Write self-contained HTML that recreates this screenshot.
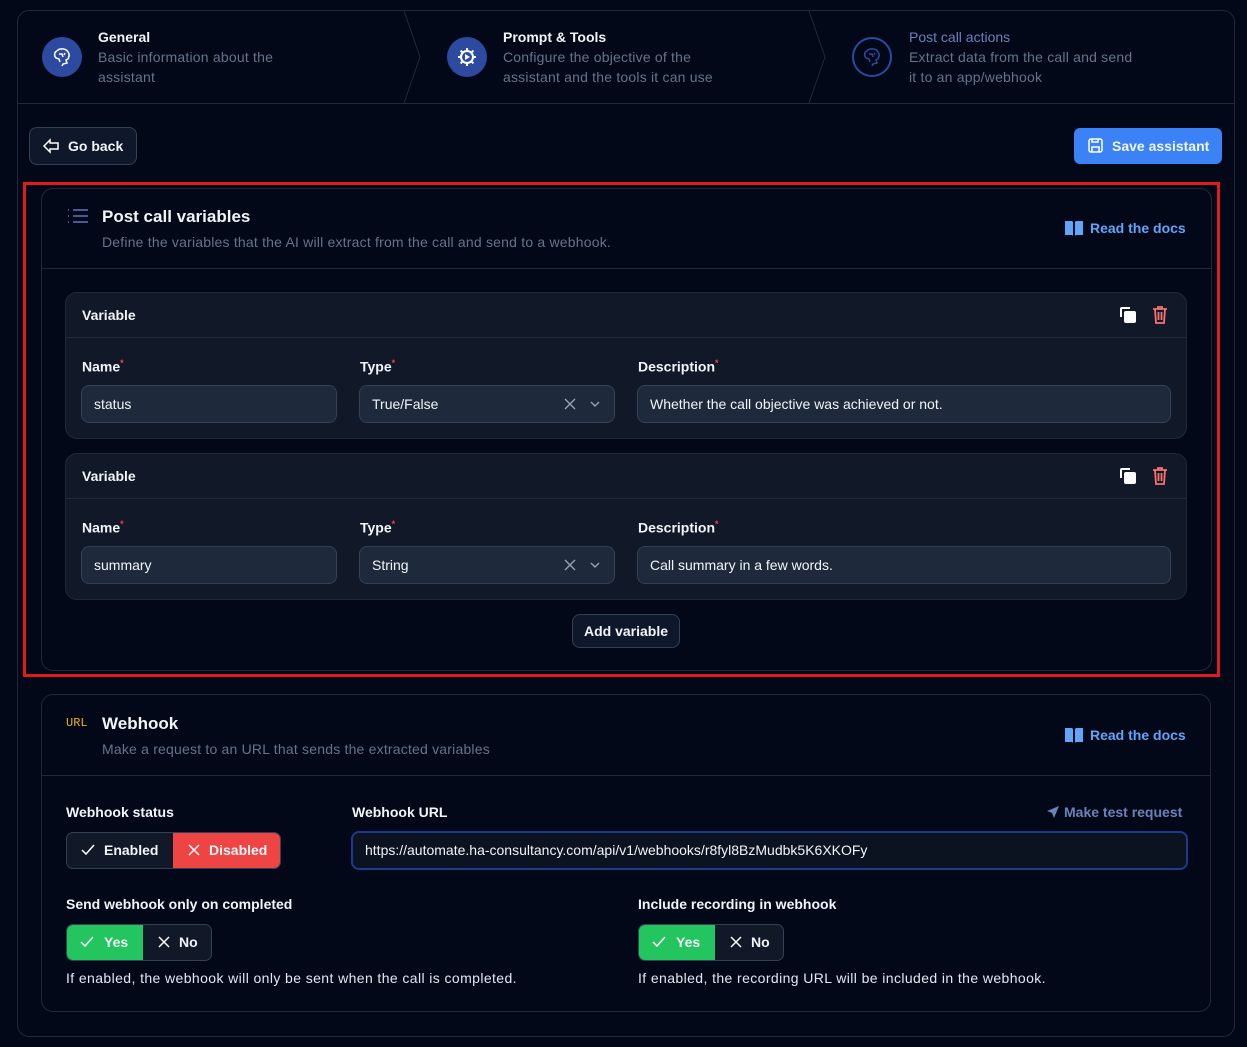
<!DOCTYPE html>
<html><head><meta charset="utf-8"><style>
*{box-sizing:border-box;margin:0;padding:0}
body{width:1247px;height:1047px;background:#020817;font-family:"Liberation Sans",sans-serif;color:#f1f5f9;position:relative;overflow:hidden;font-size:14px}
.a{position:absolute}
.b{border:1px solid #1e293b}
.t{font-weight:bold;color:#f1f5f9;white-space:nowrap}
.m{color:#64748b;white-space:nowrap;letter-spacing:0.2px}
.inp{position:absolute;height:38px;border:1px solid #334155;background:#1e293b;border-radius:8px;padding:0 12px;line-height:36px;font-size:14px;color:#f1f5f9}
.lbl{position:absolute;font-size:14px;font-weight:bold;color:#f1f5f9}
.lbl sup{color:#ef4444;font-size:9px}
.var{position:absolute;left:65px;width:1122px;height:147px;background:#111827;border:1px solid #1e293b;border-radius:12px}
</style></head><body>
<div class="a b" style="left:17px;top:10px;width:1218px;height:1027px;border-radius:12px;background:#020817"></div>
<div class="a" style="left:18px;top:103px;width:1216px;height:1px;background:#1e293b"></div>
<svg class="a" style="left:400px;top:11px" width="430" height="92"><path d="M4 0 L20 46 L4 92 M409 0 L425 46 L409 92" stroke="#1e293b" fill="none"/></svg>
<div class="a" style="left:42px;top:37px;width:40px;height:40px;border-radius:50%;background:#2b4aa0"></div>
<svg class="a" style="left:52px;top:47px" width="20" height="20" viewBox="0 0 20 20" fill="none" stroke="#fff" stroke-width="1.5"><path d="M5 4c2-3 9-3 11 1 2 2 1 5 0 7l-2 1 1 3-4 1-1 2M5 4C2 5 2 9 4 11l3 1 1 3M7 7h3l1 3M13 6l-1 2"/></svg>
<div class="a t" style="left:98px;top:29px;font-size:14px">General</div>
<div class="a m" style="left:98px;top:47px;line-height:20px">Basic information about the<br>assistant</div>
<div class="a" style="left:447px;top:37px;width:40px;height:40px;border-radius:50%;background:#2b4aa0"></div>
<svg class="a" style="left:456px;top:46px" width="22" height="22" viewBox="0 0 22 22" fill="none" stroke="#fff" stroke-width="2"><circle cx="11" cy="11" r="6"/><path d="M11 2v3M11 17v3M2 11h3M17 11h3M4.6 4.6l2 2M15.4 15.4l2 2M4.6 17.4l2-2M15.4 6.6l2-2"/><path d="M9 8l5 3-5 3z" fill="#fff" stroke="none"/></svg>
<div class="a t" style="left:503px;top:29px">Prompt &amp; Tools</div>
<div class="a m" style="left:503px;top:47px;line-height:20px">Configure the objective of the<br>assistant and the tools it can use</div>
<div class="a" style="left:852px;top:37px;width:40px;height:40px;border-radius:50%;border:2px solid #2b4aa0"></div>
<svg class="a" style="left:862px;top:47px" width="20" height="20" viewBox="0 0 20 20" fill="none" stroke="#2b4aa0" stroke-width="1.5"><path d="M5 4c2-3 9-3 11 1 2 2 1 5 0 7l-2 1 1 3-4 1-1 2M5 4C2 5 2 9 4 11l3 1 1 3M7 7h3l1 3M13 6l-1 2"/></svg>
<div class="a" style="left:909px;top:29px;color:#6b82b8;white-space:nowrap">Post call actions</div>
<div class="a m" style="left:909px;top:47px;line-height:20px">Extract data from the call and send<br>it to an app/webhook</div>
<div class="a" style="left:29px;top:127px;width:108px;height:38px;border:1px solid #334155;border-radius:8px;background:#0f172a"></div>
<svg class="a" style="left:42px;top:137px" width="18" height="18" viewBox="0 0 18 18" fill="none" stroke="#fff" stroke-width="1.5"><path d="M2 9l6-6v3h8v6H8v3z"/></svg>
<div class="a t" style="left:68px;top:138px">Go back</div>
<div class="a" style="left:1074px;top:128px;width:148px;height:36px;border-radius:6px;background:#3b82f6"></div>
<svg class="a" style="left:1087px;top:137px" width="17" height="17" viewBox="0 0 17 17" fill="none" stroke="#fff" stroke-width="1.5"><rect x="2" y="2" width="13" height="13" rx="2"/><path d="M5 15v-5h7v5M5 2v3h6V2"/></svg>
<div class="a t" style="left:1112px;top:138px">Save assistant</div>
<div class="a" style="left:23px;top:182px;width:1197px;height:495px;border:3px solid #e01b1b"></div>
<div class="a b" style="left:41px;top:188px;width:1171px;height:483px;border-radius:12px"></div>
<div class="a" style="left:42px;top:268px;width:1169px;height:1px;background:#1e293b"></div>
<svg class="a" style="left:67px;top:208px" width="22" height="16" viewBox="0 0 22 16" stroke="#5b77c4" stroke-width="1.5"><path d="M1 2h1M1 8h1M1 14h1M6 2h15M6 8h15M6 14h15"/></svg>
<div class="a t" style="left:102px;top:207px;font-size:17px">Post call variables</div>
<div class="a m" style="left:102px;top:234px">Define the variables that the AI will extract from the call and send to a webhook.</div>
<svg class="a" style="left:1065px;top:220px" width="18" height="16" viewBox="0 0 18 16" fill="#60a5fa"><path d="M0 1h7l1 1v14l-1-1H0zM18 1h-7l-1 1v14l1-1h7z"/></svg>
<div class="a" style="left:1090px;top:220px;color:#60a5fa;font-weight:bold;white-space:nowrap">Read the docs</div>
<div class="var" style="top:292px"></div>
<div class="a" style="left:66px;top:337px;width:1120px;height:1px;background:#1e293b"></div>
<div class="var" style="top:453px"></div>
<div class="a" style="left:66px;top:498px;width:1120px;height:1px;background:#1e293b"></div>
<div class="lbl" style="left:82px;top:307px">Variable</div>
<div class="lbl" style="left:82px;top:468px">Variable</div>
<svg class="a" style="left:1119px;top:306px" width="18" height="18" viewBox="0 0 18 18" fill="#fff"><path d="M1 11V3a2 2 0 012-2h8v2H3v8z"/><rect x="5" y="5" width="12" height="12" rx="2"/></svg>
<svg class="a" style="left:1119px;top:467px" width="18" height="18" viewBox="0 0 18 18" fill="#fff"><path d="M1 11V3a2 2 0 012-2h8v2H3v8z"/><rect x="5" y="5" width="12" height="12" rx="2"/></svg>
<svg class="a" style="left:1152px;top:305px" width="16" height="20" viewBox="0 0 16 20" fill="none" stroke="#f87171" stroke-width="1.8"><path d="M1 4h14M6 4V2h4v2M3 4l1 14h8l1-14M6.5 7v8M9.5 7v8"/></svg>
<svg class="a" style="left:1152px;top:466px" width="16" height="20" viewBox="0 0 16 20" fill="none" stroke="#f87171" stroke-width="1.8"><path d="M1 4h14M6 4V2h4v2M3 4l1 14h8l1-14M6.5 7v8M9.5 7v8"/></svg>
<div class="lbl" style="left:82px;top:358px">Name<sup>*</sup></div>
<div class="lbl" style="left:360px;top:358px">Type<sup>*</sup></div>
<div class="lbl" style="left:638px;top:358px">Description<sup>*</sup></div>
<div class="inp" style="left:81px;top:385px;width:256px">status</div>
<div class="inp" style="left:359px;top:385px;width:256px">True/False</div>
<div class="inp" style="left:637px;top:385px;width:534px">Whether the call objective was achieved or not.</div>
<div class="lbl" style="left:82px;top:519px">Name<sup>*</sup></div>
<div class="lbl" style="left:360px;top:519px">Type<sup>*</sup></div>
<div class="lbl" style="left:638px;top:519px">Description<sup>*</sup></div>
<div class="inp" style="left:81px;top:546px;width:256px">summary</div>
<div class="inp" style="left:359px;top:546px;width:256px">String</div>
<div class="inp" style="left:637px;top:546px;width:534px">Call summary in a few words.</div>
<svg class="a" style="left:563px;top:397px" width="40" height="14" viewBox="0 0 40 14" fill="none" stroke="#94a3b8" stroke-width="1.4"><path d="M2 2l10 10M12 2L2 12M28 5l4 4 4-4"/></svg>
<svg class="a" style="left:563px;top:558px" width="40" height="14" viewBox="0 0 40 14" fill="none" stroke="#94a3b8" stroke-width="1.4"><path d="M2 2l10 10M12 2L2 12M28 5l4 4 4-4"/></svg>
<div class="a" style="left:572px;top:614px;width:108px;height:34px;border:1px solid #334155;border-radius:8px;background:#0f172a"></div>
<div class="a t" style="left:584px;top:623px">Add variable</div>
<div class="a b" style="left:41px;top:694px;width:1170px;height:318px;border-radius:12px"></div>
<div class="a" style="left:42px;top:775px;width:1168px;height:1px;background:#1e293b"></div>
<div class="a" style="left:66px;top:716px;color:#eab308;font-size:12px;font-family:'Liberation Mono',monospace">URL</div>
<div class="a t" style="left:102px;top:714px;font-size:17px">Webhook</div>
<div class="a m" style="left:102px;top:741px">Make a request to an URL that sends the extracted variables</div>
<svg class="a" style="left:1065px;top:727px" width="18" height="16" viewBox="0 0 18 16" fill="#60a5fa"><path d="M0 1h7l1 1v14l-1-1H0zM18 1h-7l-1 1v14l1-1h7z"/></svg>
<div class="a" style="left:1090px;top:727px;color:#60a5fa;font-weight:bold;white-space:nowrap">Read the docs</div>
<div class="lbl" style="left:66px;top:804px">Webhook status</div>
<div class="lbl" style="left:352px;top:804px">Webhook URL</div>
<svg class="a" style="left:1046px;top:805px" width="14" height="14" viewBox="0 0 14 14" fill="#6b82b8"><path d="M13 1L1 6l5 2 2 5z"/></svg>
<div class="a" style="left:1064px;top:804px;color:#6b82b8;font-weight:bold;white-space:nowrap">Make test request</div>
<div class="a" style="left:66px;top:832px;width:215px;height:37px;border:1px solid #334155;border-radius:7px;background:#111827;overflow:hidden"><div class="a" style="left:106px;top:0;width:109px;height:37px;background:#ef4444"></div></div>
<svg class="a" style="left:81px;top:843px" width="14" height="14" viewBox="0 0 14 14" fill="none" stroke="#fff" stroke-width="1.5"><path d="M1 7l4 4 8-9"/></svg>
<div class="a t" style="left:104px;top:842px">Enabled</div>
<svg class="a" style="left:187px;top:843px" width="14" height="14" viewBox="0 0 14 14" fill="none" stroke="#fff" stroke-width="1.5"><path d="M2 2l10 10M12 2L2 12"/></svg>
<div class="a t" style="left:209px;top:842px">Disabled</div>
<div class="inp" style="left:351px;top:831px;width:837px;height:39px;border:2px solid #1e3a8a;background:#0b1220;line-height:35px">https://automate.ha-consultancy.com/api/v1/webhooks/r8fyl8BzMudbk5K6XKOFy</div>
<div class="lbl" style="left:66px;top:896px">Send webhook only on completed</div>
<div class="lbl" style="left:638px;top:896px">Include recording in webhook</div>
<div class="a" style="left:66px;top:924px;width:146px;height:37px;border:1px solid #334155;border-radius:7px;background:#111827;overflow:hidden"><div class="a" style="left:0;top:0;width:76px;height:37px;background:#22c55e"></div></div>
<svg class="a" style="left:80px;top:935px" width="14" height="14" viewBox="0 0 14 14" fill="none" stroke="#fff" stroke-width="1.5"><path d="M1 7l4 4 8-9"/></svg>
<div class="a t" style="left:104px;top:934px">Yes</div>
<svg class="a" style="left:157px;top:935px" width="14" height="14" viewBox="0 0 14 14" fill="none" stroke="#fff" stroke-width="1.5"><path d="M2 2l10 10M12 2L2 12"/></svg>
<div class="a t" style="left:179px;top:934px">No</div>
<div class="a" style="left:638px;top:924px;width:146px;height:37px;border:1px solid #334155;border-radius:7px;background:#111827;overflow:hidden"><div class="a" style="left:0;top:0;width:76px;height:37px;background:#22c55e"></div></div>
<svg class="a" style="left:652px;top:935px" width="14" height="14" viewBox="0 0 14 14" fill="none" stroke="#fff" stroke-width="1.5"><path d="M1 7l4 4 8-9"/></svg>
<div class="a t" style="left:676px;top:934px">Yes</div>
<svg class="a" style="left:729px;top:935px" width="14" height="14" viewBox="0 0 14 14" fill="none" stroke="#fff" stroke-width="1.5"><path d="M2 2l10 10M12 2L2 12"/></svg>
<div class="a t" style="left:751px;top:934px">No</div>
<div class="a" style="left:66px;top:970px;color:#e2e8f0;white-space:nowrap;letter-spacing:0.4px">If enabled, the webhook will only be sent when the call is completed.</div>
<div class="a" style="left:638px;top:970px;color:#e2e8f0;white-space:nowrap;letter-spacing:0.4px">If enabled, the recording URL will be included in the webhook.</div>
</body></html>
